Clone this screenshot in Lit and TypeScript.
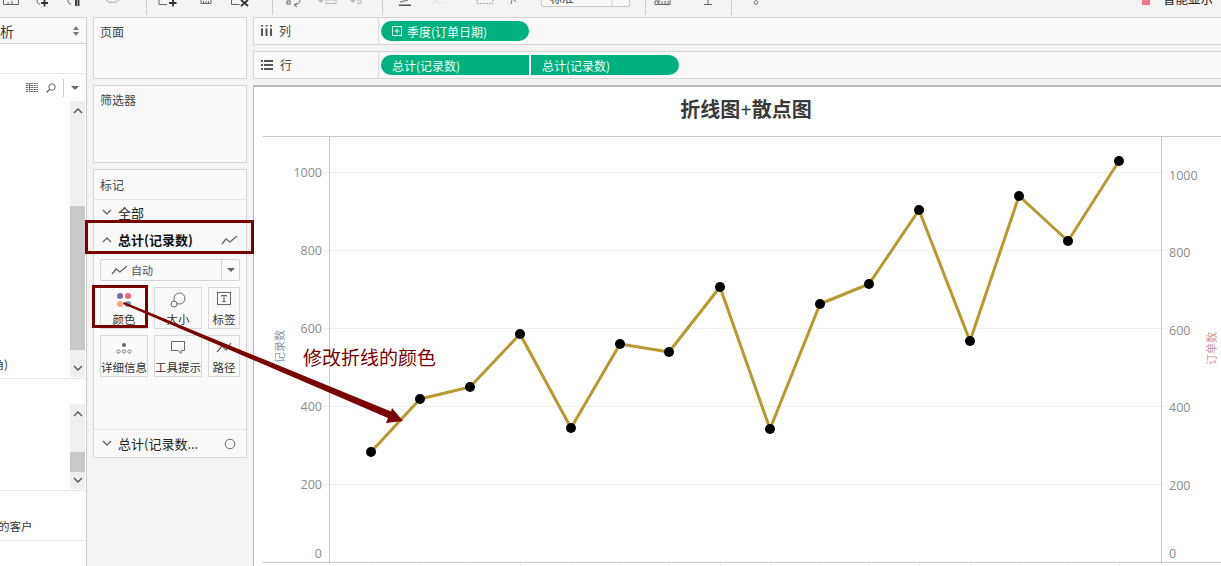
import { LitElement, html, css, svg } from "lit";
import { customElement } from "lit/decorators.js";

const PUNTOS: [number, number][] = [
  [371, 452], [420, 399], [470, 387], [520, 334], [571, 428], [620, 344], [669, 352], [720, 287],
  [770, 429], [820, 304], [869, 284], [919, 210], [970, 341], [1019, 196], [1068, 241], [1119, 161],
];
const EJE_IZQ: [string, number][] = [["1000", 172], ["800", 250], ["600", 328], ["400", 406], ["200", 484]];
const EJE_DER: [string, number][] = [["1000", 175], ["800", 252], ["600", 330], ["400", 407], ["200", 485]];

const lineaMarca = html`<svg width="17" height="10" viewBox="0 0 17 10"><path d="M1 9l4-5 4 3 7-6" fill="none" stroke="#666" stroke-width="1.3"/></svg>`;

@customElement("app-root")
export class AppRoot extends LitElement {
  static styles = css`
    :host {
      display: block;
      width: 1221px;
      height: 566px;
      overflow: hidden;
      position: relative;
      background: #f3f3f3;
      font-family: "Noto Sans CJK SC", "Noto Sans", sans-serif;
      font-size: 12px;
      color: #333;
    }
    .toolbar { display: block; width: 1221px; height: 17px; }
    .workspace { display: flex; height: 549px; }

    /* panel izquierdo */
    .datos {
      width: 86px;
      flex: none;
      display: flex;
      flex-direction: column;
      background: #fff;
      border-top: 1px solid #d4d4d4;
      border-right: 1px solid #ccc;
    }
    .datos-head {
      height: 25px;
      flex: none;
      background: #f9f9f9;
      border-bottom: 1px solid #d4d4d4;
      display: flex;
      align-items: center;
      justify-content: space-between;
      padding-right: 7px;
      font-size: 14px;
      overflow: hidden;
    }
    .datos-head span { margin-left: -14px; white-space: nowrap; }
    .datos-blank { height: 29px; flex: none; border-bottom: 1px solid #e6e6e6; }
    .datos-tools {
      height: 27px;
      flex: none;
      display: flex;
      align-items: center;
      padding-left: 26px;
    }
    .datos-tools .sep { width: 1px; height: 18px; background: #ccc; margin: 0 7px 0 7px; }
    .seccion { display: flex; flex: none; border-bottom: 1px solid #e6e6e6; }
    .seccion-1 { height: 277px; }
    .seccion-2 { height: 112px; padding-top: 25px; box-sizing: border-box; align-items: flex-start; }
    .seccion-3 { height: 49px; align-items: flex-end; }
    .seccion-txt {
      width: 70px;
      flex: none;
      display: flex;
      align-items: flex-end;
      overflow: hidden;
      font-size: 11.5px;
      white-space: nowrap;
      color: #333;
    }
    .seccion-1 .seccion-txt { padding-bottom: 6px; }
    .seccion-1 .seccion-txt span { margin-left: -23px; }
    .seccion-3 .seccion-txt span { margin-left: -2px; }
    .seccion-3 .seccion-txt { padding-bottom: 6px; }
    .scroll {
      width: 15px;
      flex: none;
      background: #efefef;
      display: flex;
      flex-direction: column;
      align-items: stretch;
    }
    .seccion-1 .scroll { align-self: flex-start; }
    .scroll .btn { display: flex; justify-content: center; flex: none; }
    .scroll .thumb { background: #c9c9c9; flex: none; }

    /* tarjetas */
    .centro {
      width: 154px;
      flex: none;
      margin: 0 6px;
      display: flex;
      flex-direction: column;
      gap: 6px;
    }
    .card {
      box-sizing: border-box;
      background: #f9f9f9;
      border: 1px solid #d4d4d4;
      flex: none;
    }
    .card-title { padding: 5px 6px 0; color: #444; height: 23px; box-sizing: border-box; }
    .paginas { height: 62px; }
    .filtros { height: 78px; }
    .marcas { height: 289px; display: flex; flex-direction: column; }
    .marcas .card-title { height: 30px; padding-top: 6px; border-bottom: 1px solid #e4e4e4; flex: none; }
    .fila {
      display: flex;
      align-items: center;
      padding: 0 8px 0 8px;
      gap: 6px;
      font-size: 13px;
      color: #222;
      flex: none;
    }
    .fila-todo { height: 24px; }
    .fila-total { height: 31px; font-weight: 700; font-size: 13px; color: #111; justify-content: space-between; }
    .fila-total .izq { display: flex; align-items: center; gap: 6px; }
    .selector {
      flex: none;
      box-sizing: border-box;
      margin: 4px 6px 0;
      height: 22px;
      border: 1px solid #d4d4d4;
      border-radius: 2px;
      background: #fafafa;
      display: flex;
      align-items: center;
    }
    .selector .txt {
      flex: 1;
      display: flex;
      align-items: center;
      gap: 3px;
      padding-left: 10px;
      font-size: 11px;
      color: #555;
    }
    .selector .flecha {
      width: 17px;
      height: 100%;
      border-left: 1px solid #d4d4d4;
      display: flex;
      align-items: center;
      justify-content: center;
    }
    .tiles {
      flex: none;
      display: grid;
      grid-template-columns: 48px 48px 32px;
      grid-auto-rows: 42px;
      gap: 6px;
      margin: 6px 6px 0;
    }
    .tile {
      box-sizing: border-box;
      border: 1px solid #d9d9d9;
      background: #fafafa;
      display: flex;
      flex-direction: column;
      align-items: center;
      justify-content: space-between;
      padding: 4px 0 2px;
      font-size: 11.5px;
      line-height: 14px;
      color: #333;
      white-space: nowrap;
      overflow: hidden;
    }
    .tile svg { flex: none; }
    .relleno { flex: 1; border-bottom: 1px solid #e4e4e4; }
    .fila-ultima { height: 27px; justify-content: space-between; font-size: 13px; padding-right: 10px; }
    .fila-ultima .izq { display: flex; align-items: center; gap: 6px; }

    /* estantes y vista */
    .main { flex: 1; min-width: 0; display: flex; flex-direction: column; gap: 6px; }
    .estante {
      box-sizing: border-box;
      height: 28px;
      flex: none;
      display: flex;
      align-items: center;
      background: #f9f9f9;
      border-top: 1px solid #d4d4d4;
      border-bottom: 1px solid #d4d4d4;
      border-left: 1px solid #d4d4d4;
    }
    .estante-label {
      width: 125px;
      height: 100%;
      box-sizing: border-box;
      flex: none;
      display: flex;
      align-items: center;
      gap: 7px;
      padding: 0 0 1px 7px;
      border-right: 1px solid #d9d9d9;
      color: #444;
    }
    .pills { display: flex; gap: 2px; padding-left: 2px; }
    .pill {
      box-sizing: border-box;
      width: 148px;
      height: 20px;
      background: #00b180;
      color: #eafff7;
      font-size: 12px;
      display: flex;
      align-items: center;
      gap: 5px;
      padding-left: 11px;
      white-space: nowrap;
    }
    .pill.ini { border-radius: 10px 0 0 10px; }
    .pill.fin { border-radius: 0 10px 10px 0; }
    .pill.ambos { border-radius: 10px; }
    .vista {
      flex: 1;
      min-height: 0;
      background: #fff;
      border-top: 2px solid #b8b8b8;
      border-left: 1px solid #bbb;
    }
    .vista svg { display: block; }
    .titulo { font-family: "Liberation Serif", "Noto Sans CJK SC", serif; font-size: 20px; font-weight: 700; fill: #3a3a3a; }
    .tick { font-family: "Open Sans", sans-serif; font-size: 12.5px; fill: #8c8c8c; }
    .eje-t { font-size: 11px; font-family: "Noto Sans CJK SC", sans-serif; }

    /* anotaciones encima de la captura */
    .caja { position: absolute; box-sizing: border-box; border: 3px solid #7a0000; }
    .caja-total { left: 85px; top: 220px; width: 169px; height: 34px; }
    .caja-color { left: 92px; top: 285px; width: 56px; height: 43px; }
    .nota { position: absolute; left: 303px; top: 343px; font-size: 19px; line-height: 28px; color: #7a0000; white-space: nowrap; }
    .flecha-nota { position: absolute; left: 0; top: 0; pointer-events: none; }
  `;

  private chevron(arriba: boolean, color = "#666") {
    return html`<svg width="10" height="7" viewBox="0 0 10 7"><path d=${arriba ? "M1 6l4-4 4 4" : "M1 1l4 4 4-4"} fill="none" stroke=${color} stroke-width="1.4"/></svg>`;
  }

  private barra(arriba: number, espacio: number, thumb: number, abajo: number) {
    return html`<div class="scroll">
      <div class="btn" style="height:${arriba}px;padding-top:6px;box-sizing:border-box">${this.chevron(true, "#555")}</div>
      <div style="height:${espacio}px;flex:none"></div>
      <div class="thumb" style="height:${thumb}px"></div>
      <div class="btn" style="height:${abajo}px;align-items:flex-end;padding-bottom:5px;box-sizing:border-box">${this.chevron(false, "#555")}</div>
    </div>`;
  }

  private toolbar() {
    const ic = "#666";
    return html`<svg class="toolbar" viewBox="0 0 1221 17">
      <g fill="none" stroke=${ic} stroke-width="1">
        <path d="M3.5 0v4.5h15V0M8 2v2M12 1v3"/>
        <path d="M37 0c0 3 1 4 3 4"/>
        <path d="M68 0c0 3 1 4 3 4"/>
        <path d="M106 0a7 4 0 0 0 13 0" stroke="#aaa"/>
        <path d="M159 0v4.5h8"/>
        <path d="M201 0v3.500h10V0M203.500 1v2M206 1v2M208.500 1v2"/>
        <path d="M231.500 0v4.500h8"/>
        <rect x="287" y="1" width="3" height="3"/>
        <path d="M300 0c0 3-2 4-6 5m0 0l3-2m-3 2l3 2"/>
        <rect x="326" y="0" width="10" height="3.500" stroke="#bbb"/>
        <rect x="358" y="0" width="3" height="3.500" stroke="#bbb"/>
        <path d="M437 0c-1 2-3 2-4 3" stroke="#ddd"/>
        <path d="M437 0c1 2 2 3 4 3" stroke="#ddd"/>
        <path d="M477 3.500h16M477 0v3.500M493 0v3.500" stroke="#aaa" stroke-dasharray="2 1"/>
        <path d="M512 0l-1 4M514 0l2 2" stroke="#777"/>
        <path d="M659 0v4.500h11V0M662 1v3M665 1v3M668 1v3M655 1h3v3.500h-3z"/>
        <path d="M708 0v4.500M704 4.500h8"/>
        <path d="M757 0c-2 1-3 2-3 3s2 2 3 1 1-2 0-3"/>
      </g>
      <path d="M41 3h7M44.500 0v6.500M76 0v6M78.500 0v6M169 3h7.500M173 0v6.500" stroke="#333" stroke-width="1.800" fill="none"/>
      <path d="M241 0l7 6M248 0l-7 6" stroke="#333" stroke-width="1.800" fill="none"/>
      <path d="M318 0l3 3 3-3zM350 0l3 3 3-3z" fill="#bbb"/>
      <rect x="399" y="4.500" width="12" height="1.500" fill="#555"/>
      <path d="M400 2l8-2" stroke="#666" fill="none"/>
      <path d="M541.500 0v5a1.500 1.500 0 0 0 1.500 1.500h85a1.500 1.500 0 0 0 1.500-1.500V0M612 0v6.500" fill="#f9f9f9" stroke="#c8c8c8"/>
      <text x="550" y="3" font-size="12" fill="#444">标准</text>
      <rect x="1142" y="0" width="8" height="5" fill="#f4768a"/>
      <text x="1163" y="4" font-size="12.500" fill="#222">智能显示</text>
      <path d="M146.500 0v15M272.500 0v15M382.500 0v15M645.500 0v15M731.500 0v15" stroke="#ccc"/>
    </svg>`;
  }

  private grafico() {
    const linea = PUNTOS.map((p) => p.join(",")).join(" ");
    return html`<svg width="967" height="479" viewBox="254 87 967 479">
      <text class="titulo" x="746" y="117" text-anchor="middle">折线图+散点图</text>
      ${EJE_IZQ.map(([, y]) => svg`<path d="M322 ${y + 0.5}H1167" stroke="#f0f0f0" fill="none"/>`)}
      <path d="M263 136.500H1221M263 562.500H1221M329.500 136V563M1161.500 136V563" stroke="#c8c8c8" fill="none"/>
      ${PUNTOS.map(([x]) => svg`<path d="M${x + 0.5} 563v3" stroke="#e8e8e8" fill="none"/>`)}
      ${EJE_IZQ.map(([t, y]) => svg`<text class="tick" x="322" y=${y + 5} text-anchor="end">${t}</text>`)}
      <text class="tick" x="322" y="558" text-anchor="end">0</text>
      ${EJE_DER.map(([t, y]) => svg`<text class="tick" x="1169" y=${y + 5}>${t}</text>`)}
      <text class="tick" x="1169" y="558">0</text>
      <text class="eje-t" transform="translate(284 363) rotate(-90)" fill="#7f9bad">记录数</text>
      <text class="eje-t" transform="translate(1216 365) rotate(-90)" fill="#c99a98">订单数</text>
      <polyline points=${linea} fill="none" stroke="#b8992f" stroke-width="3" stroke-linejoin="round"/>
      ${PUNTOS.map(([x, y]) => svg`<circle cx=${x} cy=${y} r="5" fill="#000"/>`)}
    </svg>`;
  }

  render() {
    return html`
      ${this.toolbar()}
      <div class="workspace">
        <div class="datos">
          <div class="datos-head">
            <span>分析</span>
            <svg width="6" height="10" viewBox="0 0 6 10"><path d="M3 0l3 4H0zM3 10L0 6h6z" fill="#777"/></svg>
          </div>
          <div class="datos-blank"></div>
          <div class="datos-tools">
            <svg width="12" height="9" viewBox="0 0 12 9"><path d="M0 .5h12M0 2.500h12M0 4.500h12M0 6.500h12M0 8.500h12M3.500 0v9" stroke="#666" fill="none" stroke-dasharray="2 .6"/></svg>
            <svg style="margin-left:8px" width="10" height="10" viewBox="0 0 10 10"><circle cx="6" cy="4" r="3.200" fill="none" stroke="#666"/><path d="M3.500 6.500L.5 9.500" stroke="#666" stroke-width="1.300"/></svg>
            <div class="sep"></div>
            <svg width="8" height="4" viewBox="0 0 8 4"><path d="M0 0h8L4 4z" fill="#666"/></svg>
          </div>
          <div class="seccion seccion-1">
            <div class="seccion-txt"><span>(街角)</span></div>
            ${this.barra(20, 85, 144, 27)}
          </div>
          <div class="seccion seccion-2">
            <div class="seccion-txt"></div>
            ${this.barra(20, 28, 20, 17)}
          </div>
          <div class="seccion seccion-3">
            <div class="seccion-txt"><span>的客户</span></div>
          </div>
        </div>

        <div class="centro">
          <div class="card paginas"><div class="card-title">页面</div></div>
          <div class="card filtros"><div class="card-title">筛选器</div></div>
          <div class="card marcas">
            <div class="card-title">标记</div>
            <div class="fila fila-todo">${this.chevron(false)}<span>全部</span></div>
            <div class="fila fila-total">
              <div class="izq">${this.chevron(true)}<span>总计(记录数)</span></div>
              ${lineaMarca}
            </div>
            <div class="selector">
              <div class="txt">${lineaMarca}<span>自动</span></div>
              <div class="flecha"><svg width="8" height="4" viewBox="0 0 8 4"><path d="M0 0h8L4 4z" fill="#666"/></svg></div>
            </div>
            <div class="tiles">
              <div class="tile">
                <svg width="16" height="16" viewBox="0 0 16 16"><circle cx="4" cy="4" r="3" fill="#7d6b9c"/><circle cx="12" cy="4" r="3" fill="#f0687f"/><circle cx="4" cy="12" r="3" fill="#f2a97b"/><circle cx="12" cy="12" r="3" fill="#6b9bbf"/></svg>
                <span>颜色</span>
              </div>
              <div class="tile">
                <svg width="16" height="16" viewBox="0 0 16 16"><circle cx="9.500" cy="6.500" r="5.500" fill="#fafafa" stroke="#666"/><circle cx="4" cy="12" r="3" fill="#fafafa" stroke="#666"/></svg>
                <span>大小</span>
              </div>
              <div class="tile">
                <svg width="14" height="14" viewBox="0 0 14 14"><rect x=".5" y=".5" width="13" height="12" fill="none" stroke="#666"/><path d="M4.500 4.500v-1h5v1M7 3.500v6M5.500 9.500h3" fill="none" stroke="#555"/></svg>
                <span>标签</span>
              </div>
              <div class="tile">
                <svg width="16" height="16" viewBox="0 0 16 16"><circle cx="8" cy="5" r="2" fill="#666"/><circle cx="2.500" cy="11.500" r="1.700" fill="none" stroke="#666" stroke-width=".8"/><circle cx="8" cy="11.500" r="1.700" fill="none" stroke="#666" stroke-width=".8"/><circle cx="13.500" cy="11.500" r="1.700" fill="none" stroke="#666" stroke-width=".8"/></svg>
                <span>详细信息</span>
              </div>
              <div class="tile">
                <svg width="16" height="16" viewBox="0 0 16 16"><path d="M1.500 1.500h13v9h-3.500v3l-3-3h-6.500z" fill="none" stroke="#666"/></svg>
                <span>工具提示</span>
              </div>
              <div class="tile">
                <svg width="16" height="16" viewBox="0 0 16 16"><path d="M1 12l5-6 4 4 5-7" fill="none" stroke="#666" stroke-width="1.200"/></svg>
                <span>路径</span>
              </div>
            </div>
            <div class="relleno"></div>
            <div class="fila fila-ultima">
              <div class="izq">${this.chevron(false)}<span>总计(记录数...</span></div>
              <svg width="12" height="12" viewBox="0 0 12 12"><circle cx="6" cy="6" r="4.800" fill="none" stroke="#666"/></svg>
            </div>
          </div>
        </div>

        <div class="main">
          <div class="estante">
            <div class="estante-label">
              <svg width="11" height="11" viewBox="0 0 11 11"><path d="M1 0v1.500M5.500 0v1.500M10 0v1.500M1 3.500V11M5.500 3.500V11M10 3.500V11" stroke="#555" stroke-width="2" fill="none"/></svg>
              <span>列</span>
            </div>
            <div class="pills">
              <div class="pill ambos">
                <svg width="10" height="10" viewBox="0 0 10 10"><rect x=".5" y=".5" width="9" height="9" fill="none" stroke="#d8fff0"/><path d="M5 2.500v5M2.500 5h5" stroke="#d8fff0"/></svg>
                <span>季度(订单日期)</span>
              </div>
            </div>
          </div>
          <div class="estante">
            <div class="estante-label">
              <svg width="12" height="10" viewBox="0 0 12 10"><path d="M0 1h2M3 1h9M0 5h2M3 5h9M0 9h2M3 9h9" stroke="#555" stroke-width="2" fill="none"/></svg>
              <span>行</span>
            </div>
            <div class="pills">
              <div class="pill ini">总计(记录数)</div>
              <div class="pill fin">总计(记录数)</div>
            </div>
          </div>
          <div class="vista">${this.grafico()}</div>
        </div>
      </div>

      <div class="caja caja-total"></div>
      <div class="caja caja-color"></div>
      <div class="nota">修改折线的颜色</div>
      <svg class="flecha-nota" width="1221" height="566" viewBox="0 0 1221 566">
        <path d="M124 302L391 411.500L392 408L403 421L386 423L388 418L123 304Z" fill="#7a0000"/>
      </svg>
    `;
  }
}
